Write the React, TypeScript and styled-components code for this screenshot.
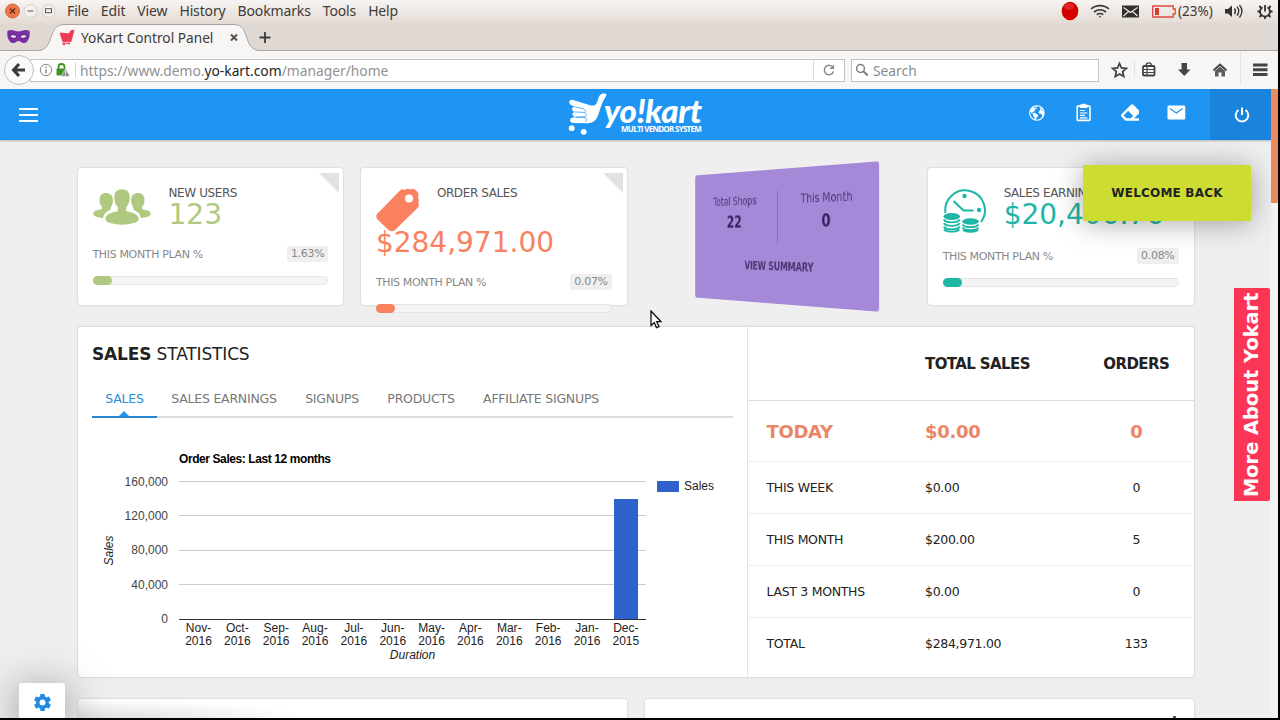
import React from "react";
import styled, { createGlobalStyle } from "styled-components";
import { FaEraser } from "react-icons/fa";
import { IoEarth, IoSettingsSharp } from "react-icons/io5";

const GlobalStyle = createGlobalStyle`
  * {
    box-sizing: border-box;
  }

  body {
    margin: 0;
    overflow: hidden;
    background: #000;
    font-family: "DejaVu Sans", sans-serif;
  }
`;

const menuItems = ["File", "Edit", "View", "History", "Bookmarks", "Tools", "Help"];

const tabs = [
  { label: "SALES", width: 65 },
  { label: "SALES EARNINGS", width: 134 },
  { label: "SIGNUPS", width: 82 },
  { label: "PRODUCTS", width: 96 },
  { label: "AFFILIATE SIGNUPS", width: 144 },
];

const totals = [
  { label: "THIS WEEK", sales: "$0.00", orders: "0" },
  { label: "THIS MONTH", sales: "$200.00", orders: "5" },
  { label: "LAST 3 MONTHS", sales: "$0.00", orders: "0" },
  { label: "TOTAL", sales: "$284,971.00", orders: "133" },
];

const months = ["Nov", "Oct", "Sep", "Aug", "Jul", "Jun", "May", "Apr", "Mar", "Feb", "Jan", "Dec"];

const MenuBar = () => (
  <MenuRow>
    <svg width="58" height="22" viewBox="0 0 58 22">
      <circle cx="12.5" cy="11" r="7" fill="#ee7748" stroke="#d9663c" />
      <path d="M10 8.5l5 5m0-5l-5 5" stroke="#5d2a17" strokeWidth="1.2" />
      <circle cx="30.5" cy="11" r="6.5" fill="#f4f0ed" stroke="#d8d0ca" />
      <path d="M27.5 11h6" stroke="#5b5450" />
      <circle cx="48.5" cy="11" r="6.5" fill="#f4f0ed" stroke="#d8d0ca" />
      <rect x="45.5" y="8.7" width="6" height="4" fill="none" stroke="#5b5450" />
    </svg>
    <MenuList>
      {menuItems.map((item) => (
        <span key={item}>{item}</span>
      ))}
    </MenuList>
    <Tray>
      <svg width="62" height="22" viewBox="0 0 62 22">
        <ellipse cx="10" cy="11" rx="8.3" ry="9.3" fill="#d40000" />
        <ellipse cx="9" cy="6.500" rx="5" ry="3.500" fill="#e33a3a" opacity="0.6" />
        <g transform="translate(30 0)" fill="none" stroke="#3c3a38" strokeWidth="1.6">
          <path d="M1 9C6 4.500 14 4.500 19 9M4 12c4-3 8-3 12 0M6.700 14.700c2.300-1.600 4.300-1.600 6.600 0" />
          <circle cx="10" cy="16.600" r="0.900" fill="#3c3a38" stroke="none" />
        </g>
      </svg>
      <svg width="58" height="22" viewBox="0 0 58 22">
        <rect x="0" y="5.500" width="17" height="12" fill="#33312f" />
        <path d="M1.500 7.500l7 5 7-5M1.500 16l5-4.500M15.500 16l-5-4.500" stroke="#f2eeea" strokeWidth="1.100" fill="none" />
        <path d="M30.700 6h20.500v3h2v5h-2v3H30.700z" fill="none" stroke="#df4a40" strokeWidth="1.300" />
        <rect x="33" y="8" width="4" height="7" fill="#df3a30" />
      </svg>
      <Battery>(23%)</Battery>
      <svg width="54" height="22" viewBox="0 0 54 22">
        <path d="M1 9h3l4-3.500v11.500L4 13.500H1z" fill="#33312f" />
        <path d="M10.500 8.500q2 2.700 0 5.500M13 6.700q3.500 4.500 0 9M15.500 5q5 6.200 0 12.500" fill="none" stroke="#33312f" strokeWidth="1.300" />
        <g transform="translate(41 11.500)" stroke="#33312f" fill="none">
          <path d="M-2.500 -4.300a5 5 0 1 0 5 0" strokeWidth="1.800" />
          <path d="M0-6.500v6.500" strokeWidth="1.800" />
          <path d="M-5 0h-2.500M5 0h2.500M0 5v2.500M-3.500 3.500l-2 2M3.500 3.500l2 2M-3.700-3.500l-2-2M3.700-3.500l2-2" strokeWidth="1.800" />
        </g>
      </svg>
    </Tray>
  </MenuRow>
);

const TabStrip = () => (
  <TabRow>
    <svg width="275" height="28" viewBox="0 23 275 28">
      <path d="M38 51C55 50 47 24 64 24H234C251 24 242 50 260 51z" fill="#f7f6f5" />
      <path d="M38 50.500C55 50 47 24.500 64 24.500H234C251 24.500 242 50 260 50.500" fill="none" stroke="#aaa5a2" />
      <path d="M7.500 31c4-2.500 8 .5 11 .5s7-3 11-.5c1 5-1 11-5 12-3 .5-4-2-6-2s-3 2.500-6 2c-4-1-6-7-5-12z" fill="#7b2fa5" />
      <path d="M10 36q4-3 7 1-4 3-7-1zM27 36q-4-3-7 1 4 3 7-1z" fill="#f4e5fa" stroke="#481463" strokeWidth="0.700" />
      <path d="M60 33l9 .8 1.800-3 3.200-.8-3 11.500-8 .5zM62 43.500h8" fill="#ef3950" stroke="#ef3950" strokeWidth="0.800" />
      <circle cx="64" cy="44.500" r="1" fill="#ef3950" />
      <circle cx="69" cy="43.500" r="1" fill="#ef3950" />
      <path d="M231 34.500l6 6m0-6l-6 6" stroke="#56524f" strokeWidth="2" />
      <path d="M259.500 37.500h11M265 32v11" stroke="#3d3a38" strokeWidth="1.800" />
    </svg>
    <TabTitle>YoKart Control Panel</TabTitle>
  </TabRow>
);

const NavBar = () => (
  <NavRow>
    <BackButton>
      <svg width="16" height="14" viewBox="0 0 16 14">
        <path d="M8 1L2.500 7 8 13M3 7h11" fill="none" stroke="#3c3a39" strokeWidth="3" />
      </svg>
    </BackButton>
    <UrlField>
      <svg width="41" height="20" viewBox="0 0 41 20">
        <circle cx="9" cy="10" r="5.700" fill="none" stroke="#888" />
        <path d="M9 9.200v4M9 6.500v1.500" stroke="#777" strokeWidth="1.300" />
        <path d="M21.500 9V7a3 3 0 0 1 6 0v2" fill="none" stroke="#3d9221" strokeWidth="1.800" />
        <rect x="19.500" y="8.500" width="9" height="7" rx="1" fill="#3d9221" />
        <path d="M28.500 8.500l4.500 8h-9z" fill="#8d8d8d" stroke="#fff" strokeWidth="0.600" />
        <path d="M28.500 11v2.500M28.500 14.500v1" stroke="#fff" />
        <path d="M38.500 2v15" stroke="#d5d5d5" />
      </svg>
      <Url>
        https://www.demo.<b>yo-kart.com</b>/manager/home
      </Url>
      <Reload>
        <svg width="14" height="14" viewBox="0 0 14 14">
          <path d="M11 4.500A4.700 4.700 0 1 0 11.500 8.500" fill="none" stroke="#888" strokeWidth="1.400" />
          <path d="M12 1.500V6H7.500z" fill="#888" />
        </svg>
      </Reload>
    </UrlField>
    <SearchField>
      <svg width="14" height="14" viewBox="0 0 14 14" fill="none" stroke="#7d7d7d">
        <circle cx="5.500" cy="5.500" r="3.900" strokeWidth="1.500" />
        <path d="M8.300 8.300l4.500 4.200" strokeWidth="2" />
      </svg>
      Search
    </SearchField>
    <svg width="170" height="38" viewBox="1108 51 170 38">
      <path d="M1119.500 63.500l2 4.500 4.800.5-3.600 3.200 1 4.800-4.200-2.500-4.200 2.500 1-4.800-3.600-3.200 4.800-.5z" fill="none" stroke="#464443" strokeWidth="1.800" />
      <path d="M1134.500 61v17M1240.500 51v34" stroke="#e4e2e0" />
      <g fill="none" stroke="#464443" strokeWidth="1.800">
        <rect x="1143" y="66" width="11.500" height="9.500" rx="1" />
        <path d="M1146 65.500c0-3.500 5.500-3.500 5.500 0M1143 69.500h11.500M1143 72.500h11.500M1147 67v8" strokeWidth="1.200" />
      </g>
      <path d="M1181.500 63h5.500v6.500h3.500l-6.200 6.500-6.300-6.500h3.500z" fill="#464443" />
      <path d="M1213.500 70.500l6.500-6 6.500 6" fill="none" stroke="#464443" strokeWidth="1.800" />
      <path d="M1215 71l5-4.500 5 4.500v5.500h-3.500v-4h-3v4H1215z" fill="#5d5b5a" />
      <path d="M1253 65h14.500M1253 69.700h14.500M1253 74.400h14.500" stroke="#464443" strokeWidth="3" />
    </svg>
  </NavRow>
);

const AppHeader = () => (
  <HeaderBar>
    <Burger>
      <i />
      <i />
      <i />
    </Burger>
    <Logo>
      <svg width="42" height="46" viewBox="566 90 42 46">
        <path
          d="M603 91.500C607 91 607 93 605.500 95C603.500 98 602 101 600.500 106L598 113.500C596.500 118 593 121 588 121.300L573 121C569 120.500 569 116 573 115.500L575.500 115C572 114.500 571 110.500 575 110C571 109 571 105 575 104.800L571 103C568 101.500 569 97 573 98L591 103.500C595 104 596 103 597.500 99C599 94 600 92 603 91.500z"
          fill="#fff"
        />
        <path
          d="M575 104.800l9 2.200q3 1.500 1 3.500l-10-.5M575.500 115l9.500-.2q2.500-2 .5-4M575.500 115.400l10 0q2.500 2.500 0 4.300"
          fill="none"
          stroke="#1f95f3"
          strokeWidth="0.700"
        />
        <circle cx="571.700" cy="126.200" r="2.900" fill="#fff" />
        <circle cx="583.700" cy="129.800" r="2.900" fill="#fff" />
      </svg>
      <LogoText>
        <strong>yo!kart</strong>
        <small>MULTI VENDOR SYSTEM</small>
      </LogoText>
    </Logo>
    <HeaderIcons>
      <IoEarth size={18} />
      <svg width="16" height="19" viewBox="0 0 16 19">
        <rect x="1.200" y="3" width="13" height="14.500" rx="0.800" fill="none" stroke="#fff" strokeWidth="1.600" />
        <path d="M4 1.500h2a2 2 0 0 1 3.500 0h2V5H4z" fill="#fff" />
        <path d="M4 7.500h5M4 10h7.500M4 12.500h5M4 15h7.500" stroke="#fff" strokeWidth="1.200" />
      </svg>
      <FaEraser size={19} />
      <svg width="19" height="15" viewBox="0 0 19 15">
        <rect x="0.500" y="0.500" width="18" height="14" rx="1.200" fill="#fff" />
        <path d="M3 3.500l6.500 4.500L16 3.500" fill="none" stroke="#1f95f3" strokeWidth="1.200" />
      </svg>
    </HeaderIcons>
    <PowerButton>
      <svg width="18" height="18" viewBox="0 0 18 18" fill="none" stroke="#fff" strokeWidth="2">
        <path d="M5.500 4a6.300 6.300 0 1 0 7 0M9 1.500v7.500" />
      </svg>
    </PowerButton>
  </HeaderBar>
);

const UsersIcon = () => (
  <svg width="58" height="38" viewBox="0 0 58 38" fill="#afc980">
    <path d="M13 5c4 0 7 2.500 7 7 0 4-1.500 6-2.500 8v2c-4 1.500-7 4-7.300 8C4 29.500 0 28 .3 25.500.5 22 5 22.500 9 21v-2c-2-2-2.500-4-2.500-7 0-4.500 2.500-7 6.500-7z" />
    <path d="M45 5c-4 0-7 2.500-7 7 0 4 1.500 6 2.500 8v2c4 1.500 7 4 7.300 8 6.200-.5 10.200-2 9.900-4.500C57.500 22 53 22.500 49 21v-2c2-2 2.500-4 2.500-7 0-4.500-2.500-7-6.500-7z" />
    <path
      d="M29 .5c5 0 8.500 3 8.500 9 0 4-1.500 7.500-3.500 10v3c5 1.500 12.500 2.500 12.500 8.500 0 4-9 6.500-17.500 6.500S11.500 35 11.500 31c0-6 7.500-7 12.500-8.500v-3c-2-2.500-3.500-6-3.500-10 0-6 3.500-9 8.500-9z"
      stroke="#fff"
      strokeWidth="1.500"
    />
  </svg>
);

const TagIcon = () => (
  <svg width="44" height="44" viewBox="0 0 44 44">
    <path
      d="M24 2.500c1.500-1.500 3-1.500 4.500-.5 2-1.500 4-1.500 6-.5 2-1 4.500-.5 6 1.500 2 1.500 2.500 4 1.500 6.500 1 2 1 3.500.3 5.500 1 1.500.7 3-.3 4.500L19 42c-2 1.700-4.500 1.700-6.500 0L1.500 31.500c-1.700-2-1.700-4 0-6z"
      fill="#fa815f"
    />
    <circle cx="33" cy="10.500" r="4" fill="#fff" />
  </svg>
);

const EarningsIcon = () => (
  <svg width="44" height="45" viewBox="0 0 44 45">
    <g fill="none" stroke="#1fb5a7" strokeWidth="2">
      <path d="M2.500 25A19.800 19.800 0 1 1 38 34" />
      <path d="M10.500 13l10 9.500h10" strokeWidth="2.200" />
    </g>
    <circle cx="21.500" cy="8" r="2.200" fill="#1fb5a7" />
    <circle cx="36" cy="22" r="2.200" fill="#1fb5a7" />
    <path d="M-1 25h20v8h17v12H-1z" fill="#fff" />
    <g fill="#1fb5a7">
      <ellipse cx="8.800" cy="28.500" rx="8.300" ry="3.500" />
      <ellipse cx="27.500" cy="33.500" rx="8.300" ry="3.200" />
    </g>
    <g fill="none" stroke="#1fb5a7" strokeWidth="1.800">
      <path d="M.8 31.500c2 3.800 14 3.800 16 0M.8 35c2 3.800 14 3.800 16 0M.8 38.500c2 3.800 14 3.800 16 0M1 41.500c3 2.800 12.500 2.800 15.500 0" />
      <path d="M19.500 36.500c2 3.500 14 3.500 16 0M19.500 39.500c2 3.500 14 3.500 16 0M20 42c3 2.300 12 2.300 15 0" />
    </g>
  </svg>
);

interface StatProps {
  icon: React.ReactNode;
  title: string;
  value: string;
  percent: string;
  color: string;
  headHeight: number;
  iconSpace: number;
  wrapped?: boolean;
}

const StatCard = (props: StatProps) => (
  <Card>
    <Corner />
    <StatHead $height={props.headHeight}>
      <StatIcon $width={props.iconSpace}>{props.icon}</StatIcon>
      <StatTitle>{props.title}</StatTitle>
      <StatValue $color={props.color} $wrapped={props.wrapped}>
        {props.value}
      </StatValue>
    </StatHead>
    <PlanRow>
      THIS MONTH PLAN %<Badge>{props.percent}</Badge>
    </PlanRow>
    <Track>
      <Fill $color={props.color} />
    </Track>
  </Card>
);

const SalesChart = () => {
  const left = 179;
  const step = 38.85;

  return (
    <ChartSvg width="640" height="240" viewBox="92 430 640 240">
      <text x="179" y="463" fontWeight="700" fill="#000" textLength="152">
        Order Sales: Last 12 months
      </text>
      {["160,000", "120,000", "80,000", "40,000", "0"].map((label, i) => (
        <g key={label}>
          <text x="168" y={485.5 + i * 34.4} textAnchor="end" fill="#444">
            {label}
          </text>
          <path
            d={`M${left} ${Math.round(481 + i * 34.4) + 0.5}H646`}
            stroke={i === 4 ? "#333" : "#ccc"}
          />
        </g>
      ))}
      <rect x="614" y="499" width="24" height="120" fill="#2f62cd" />
      {months.map((month, i) => (
        <text key={month} textAnchor="middle" fill="#222">
          <tspan x={left + 19.5 + i * step} y="632">
            {month}-
          </tspan>
          <tspan x={left + 19.5 + i * step} y="645">
            {month === "Dec" ? "2015" : "2016"}
          </tspan>
        </text>
      ))}
      <text x="412.500" y="659" textAnchor="middle" fontStyle="italic" fill="#222">
        Duration
      </text>
      <text transform="translate(113 550.500) rotate(-90)" textAnchor="middle" fontStyle="italic" fill="#222">
        Sales
      </text>
      <rect x="657" y="481" width="22" height="11" fill="#2f62cd" />
      <text x="684" y="490" fill="#222">
        Sales
      </text>
    </ChartSvg>
  );
};

const App = () => (
  <Screen>
    <GlobalStyle />
    <MenuBar />
    <TabStrip />
    <NavBar />
    <Viewport>
      <Page>
        <AppHeader />
        <Content>
          <StatGrid>
            <StatCard
              icon={<UsersIcon />}
              title="NEW USERS"
              value="123"
              percent="1.63%"
              color="#afc980"
              headHeight={62}
              iconSpace={76}
            />
            <StatCard
              icon={<TagIcon />}
              title="ORDER SALES"
              value="$284,971.00"
              percent="0.07%"
              color="#fa815f"
              headHeight={90}
              iconSpace={61}
              wrapped
            />
            <FlipCard>
              <FlipColumns>
                <div>
                  Total Shops<b>22</b>
                </div>
                <div>
                  This Month<b>0</b>
                </div>
              </FlipColumns>
              <Summary>VIEW SUMMARY</Summary>
            </FlipCard>
            <StatCard
              icon={<EarningsIcon />}
              title="SALES EARNINGS"
              value="$20,406.76"
              percent="0.08%"
              color="#1fb5a7"
              headHeight={64}
              iconSpace={61}
            />
          </StatGrid>
          <Panel>
            <Statistics>
              <Heading>
                <b>SALES</b> STATISTICS
              </Heading>
              <Tabs>
                {tabs.map((tab, i) => (
                  <Tab key={tab.label} $width={tab.width} $active={i === 0}>
                    {tab.label}
                  </Tab>
                ))}
              </Tabs>
              <SalesChart />
            </Statistics>
            <Totals>
              <TotalsRow $kind="head">
                <span />
                <span>TOTAL SALES</span>
                <span>ORDERS</span>
              </TotalsRow>
              <TotalsRow $kind="today">
                <span>TODAY</span>
                <span>$0.00</span>
                <span>0</span>
              </TotalsRow>
              {totals.map((row) => (
                <TotalsRow key={row.label}>
                  <span>{row.label}</span>
                  <span>{row.sales}</span>
                  <span>{row.orders}</span>
                </TotalsRow>
              ))}
            </Totals>
          </Panel>
          <BottomGrid>
            <BottomCard $shaded />
            <BottomCard>
              <i />
            </BottomCard>
          </BottomGrid>
        </Content>
        <GearButton>
          <IoSettingsSharp size={19} />
        </GearButton>
      </Page>
      <ScrollBar>
        <ScrollThumb />
      </ScrollBar>
    </Viewport>
    <Toast>WELCOME BACK</Toast>
    <MoreTab>More About Yokart</MoreTab>
    <Pointer width="12" height="19" viewBox="0 0 12 19">
      <path d="M1 1v14.500l3.300-3 2.200 5.200 2.500-1-2.300-5h4.300z" fill="#fff" stroke="#111" strokeWidth="1.300" />
    </Pointer>
  </Screen>
);

export default App;

const Screen = styled.div`
  position: relative;
  display: flex;
  flex-direction: column;
  width: 1280px;
  height: 720px;
  padding: 0 2px 2px 0;
  overflow: hidden;
  background: #000;
`;

const MenuRow = styled.div`
  display: flex;
  align-items: center;
  flex: 0 0 23px;
  min-height: 0;
  padding-bottom: 1px;
  background: linear-gradient(#f7f4f2, #e4dcd6);
  font-family: "Noto Sans", sans-serif;
  font-size: 14px;
  line-height: 20px;
  color: #3f3b38;
`;

const MenuList = styled.div`
  display: flex;
  gap: 12px;
  margin-left: 9px;
  letter-spacing: -0.14px;
`;

const Tray = styled.div`
  display: flex;
  align-items: center;
  margin-left: auto;
`;

const Battery = styled.span`
  width: 46px;
  margin-left: -2px;
  font-size: 13.5px;
`;

const TabRow = styled.div`
  display: flex;
  align-items: center;
  flex: 0 0 28px;
  background: linear-gradient(#e0d8d2 27px, #aaa5a2 27px);
`;

const TabTitle = styled.span`
  margin-left: -194px;
  font-family: "Noto Sans", sans-serif;
  font-size: 13.7px;
  color: #3f3b38;
`;

const NavRow = styled.div`
  display: flex;
  align-items: center;
  flex: 0 0 38px;
  padding-left: 4px;
  background: #f7f6f5;
  font-family: "Noto Sans", sans-serif;
  font-size: 13.8px;
`;

const BackButton = styled.div`
  display: flex;
  align-items: center;
  justify-content: center;
  flex: 0 0 30px;
  height: 30px;
  border: 1px solid #c2bfbd;
  border-radius: 50%;
  background: #fbfafa;
  z-index: 1;
`;

const UrlField = styled.div`
  display: flex;
  align-items: center;
  width: 815px;
  height: 23px;
  margin-left: -4px;
  padding-left: 6px;
  border: 1px solid #c4c1bf;
  background: #fff;
`;

const Url = styled.span`
  margin-left: 2px;
  color: #919191;

  b {
    font-weight: 400;
    color: #1e1e1e;
  }
`;

const Reload = styled.span`
  display: flex;
  align-items: center;
  justify-content: center;
  width: 31px;
  height: 21px;
  margin-left: auto;
  border-left: 1px solid #dcdad9;
`;

const SearchField = styled.div`
  display: flex;
  align-items: center;
  gap: 4px;
  width: 248px;
  height: 23px;
  margin: 0 9px 0 6px;
  padding-left: 3px;
  border: 1px solid #c4c1bf;
  background: #fff;
  color: #8b8b8b;
`;

const Viewport = styled.div`
  display: flex;
  flex: 1;
  min-height: 0;
`;

const Page = styled.div`
  position: relative;
  width: 1271px;
  overflow: hidden;
  background: #efefef;
`;

const ScrollBar = styled.div`
  width: 7px;
  background: #f4f4f4;
`;

const ScrollThumb = styled.div`
  height: 114px;
  background: #ec8b60;
`;

const HeaderBar = styled.header`
  display: flex;
  align-items: center;
  height: 51px;
  background: #1f95f3;
  box-shadow: 0 1px 2px rgba(0, 0, 0, 0.25);
  color: #fff;
`;

const Burger = styled.div`
  display: flex;
  flex-direction: column;
  gap: 4px;
  margin: 1px 519px 0 19px;

  i {
    width: 19px;
    height: 2px;
    background: #fff;
  }
`;

const Logo = styled.div`
  display: flex;
  margin-left: 9px;
`;

const LogoText = styled.div`
  display: flex;
  flex-direction: column;
  margin-left: -4px;
  font-family: "Open Sans", sans-serif;
  white-space: nowrap;

  strong {
    height: 31px;
    padding-top: 2px;
    font-family: Lato, sans-serif;
    font-size: 33px;
    font-weight: 900;
    font-style: italic;
    line-height: 33px;
    letter-spacing: -0.3px;
  }

  small {
    margin-left: 17px;
    font-size: 8px;
    font-weight: 700;
    line-height: 12px;
    letter-spacing: -0.72px;
  }
`;

const HeaderIcons = styled.div`
  display: flex;
  align-items: center;
  width: 158px;
  margin: -4px 24px 0 auto;

  svg:nth-child(2) {
    margin-left: 30px;
  }

  svg:nth-child(3) {
    margin-left: 29px;
  }

  svg:nth-child(4) {
    margin-left: 28px;
  }
`;

const PowerButton = styled.div`
  display: flex;
  align-items: center;
  justify-content: center;
  width: 61px;
  height: 51px;
  padding: 1px 0 0 2px;
  background: #1a84dc;
`;

const Content = styled.main`
  width: 1115.5px;
  margin: 28px 0 0 78px;
`;

const StatGrid = styled.div`
  display: grid;
  grid-template-columns: repeat(4, 1fr);
  gap: 18px;
`;

const Card = styled.section`
  position: relative;
  height: 137px;
  padding: 15px 15px 0 14.5px;
  border-radius: 3px;
  background: #fff;
  box-shadow: 0 0 2px rgba(0, 0, 0, 0.25);
`;

const Corner = styled.i`
  position: absolute;
  top: 5px;
  right: 4px;
  border-top: 20px solid #e2e2e2;
  border-left: 20px solid transparent;
`;

const StatHead = styled.div<{ $height: number }>`
  display: grid;
  grid-template-columns: auto 1fr;
  grid-template-rows: 20px 1fr;
  height: ${({ $height }) => $height}px;
`;

const StatIcon = styled.div<{ $width: number }>`
  grid-row: 1 / 3;
  width: ${({ $width }) => $width}px;
  height: 44px;
  padding-top: 5px;
`;

const StatTitle = styled.span`
  font-size: 12px;
  line-height: 20px;
  letter-spacing: -0.4px;
  color: #555;
`;

const StatValue = styled.span<{ $color: string; $wrapped?: boolean }>`
  margin: ${({ $wrapped }) => ($wrapped ? "26px 0 0 -61px" : "-2px 0 0")};
  font-size: 28px;
  line-height: 28px;
  color: ${({ $color }) => $color};
`;

const PlanRow = styled.div`
  display: flex;
  align-items: center;
  justify-content: space-between;
  height: 18px;
  font-size: 11px;
  letter-spacing: -0.35px;
  color: #888;
`;

const Badge = styled.span`
  padding: 0 4px;
  border-radius: 2px;
  background: #efefef;
  line-height: 16px;
  letter-spacing: -0.3px;
`;

const Track = styled.div`
  height: 9px;
  margin-top: 13px;
  border: 1px solid #e4e4e4;
  border-radius: 5px;
  background: #f4f4f4;
`;

const Fill = styled.div<{ $color: string }>`
  width: 19px;
  height: 9px;
  margin: -1px;
  border-radius: 5px;
  background: ${({ $color }) => $color};
`;

const FlipCard = styled.section`
  height: 137px;
  padding-top: 22px;
  border-radius: 3px;
  background: #a588d8;
  color: #4a3672;
  font-size: 12.3px;
  text-align: center;
  transform: perspective(893px) translateZ(-15px) rotateY(-45.7deg);
`;

const FlipColumns = styled.div`
  display: flex;

  div {
    flex: 1;
    height: 53px;
    padding-top: 2px;
  }

  div + div {
    border-left: 1px solid #8467b8;
  }

  b {
    display: block;
    margin-top: 5px;
    font-size: 17.5px;
    color: #38215f;
  }
`;

const Summary = styled.p`
  margin: 17px 0 0;
  font-size: 11.4px;
  font-weight: 700;
  letter-spacing: -0.2px;
`;

const Panel = styled.section`
  display: flex;
  height: 350px;
  margin-top: 22px;
  border-radius: 3px;
  background: #fff;
  box-shadow: 0 0 2px rgba(0, 0, 0, 0.3);
`;

const Statistics = styled.div`
  width: 669px;
  padding: 17px 14px 0;
`;

const Heading = styled.h2`
  margin: 0;
  font-size: 17px;
  font-weight: 400;
  line-height: 20px;
  letter-spacing: -0.15px;
  color: #222;
`;

const Tabs = styled.nav`
  display: flex;
  height: 38px;
  margin-top: 16px;
  border-bottom: 2px solid #dcdcdc;
`;

const Tab = styled.span<{ $width: number; $active?: boolean }>`
  position: relative;
  flex: 0 0 ${({ $width }) => $width}px;
  height: 38px;
  font-size: 12.5px;
  line-height: 38px;
  letter-spacing: -0.22px;
  text-align: center;
  white-space: nowrap;
  color: ${({ $active }) => ($active ? "#2a8fd8" : "#777")};
  border-bottom: ${({ $active }) => ($active ? "2px solid #2a86cf" : "none")};

  &::after {
    content: "";
    display: ${({ $active }) => ($active ? "block" : "none")};
    position: absolute;
    left: 27px;
    bottom: 0;
    border: 5.5px solid transparent;
    border-top: 0;
    border-bottom-color: #1f95f3;
  }
`;

const ChartSvg = styled.svg`
  display: block;
  margin-top: 12px;
  font-family: "Liberation Sans", sans-serif;
  font-size: 12px;
`;

const Totals = styled.div`
  flex: 1;
  border-left: 1px solid #e2e2e2;
`;

const TotalsRow = styled.div<{ $kind?: "head" | "today" }>`
  display: grid;
  grid-template-columns: 158.5px 1fr 114.5px;
  align-items: center;
  height: ${({ $kind }) => ($kind === "head" ? 74 : $kind === "today" ? 61 : 52)}px;
  padding: 0 0 ${({ $kind }) => ($kind ? 0 : 1)}px 18.5px;
  border-bottom: 1px solid ${({ $kind }) => ($kind === "head" ? "#dedede" : "#eee")};
  font-size: ${({ $kind }) => ($kind === "head" ? 15 : $kind === "today" ? 18 : 12.5)}px;
  font-weight: ${({ $kind }) => ($kind ? 700 : 400)};
  letter-spacing: ${({ $kind }) => ($kind === "head" ? -0.6 : -0.3)}px;
  color: ${({ $kind }) => ($kind === "today" ? "#ec8565" : "#222")};

  &:last-child {
    border-bottom: 0;
  }

  span:last-child {
    text-align: center;
  }
`;

const BottomGrid = styled.div`
  display: grid;
  grid-template-columns: 1fr 1fr;
  gap: 18px;
  margin-top: 22px;
`;

const BottomCard = styled.section<{ $shaded?: boolean }>`
  display: flex;
  justify-content: flex-end;
  height: 60px;
  padding: 17px 18px;
  border-radius: 3px;
  background: ${({ $shaded }) =>
    $shaded ? "radial-gradient(ellipse 240px 22px at 0 22px, #dadada, #fff) #fff" : "#fff"};
  box-shadow: 0 0 2px rgba(0, 0, 0, 0.25);

  i {
    width: 3px;
    height: 3px;
    background: #555;
  }
`;

const GearButton = styled.div`
  position: absolute;
  left: 19px;
  bottom: 0;
  display: flex;
  align-items: center;
  justify-content: center;
  width: 46px;
  height: 35px;
  padding-top: 3px;
  border-radius: 2px 2px 0 0;
  background: #fff;
  box-shadow: 0 8px 44px rgba(0, 0, 0, 0.5);
  color: #1f8be3;
`;

const Toast = styled.div`
  position: absolute;
  top: 165px;
  left: 1083px;
  width: 168px;
  height: 56px;
  background: #cddc31;
  box-shadow: 0 2px 28px rgba(0, 0, 0, 0.35);
  color: #222;
  font-size: 12px;
  font-weight: 700;
  line-height: 56px;
  letter-spacing: 0.2px;
  text-align: center;
`;

const MoreTab = styled.div`
  position: absolute;
  top: 288px;
  left: 1234px;
  width: 36px;
  height: 213px;
  border-radius: 2px 0 0 2px;
  background: #fa3556;
  color: #fff;
  font-size: 19.4px;
  font-weight: 700;
  line-height: 36px;
  text-align: center;
  white-space: nowrap;
  writing-mode: vertical-rl;
  transform: rotate(180deg);
`;

const Pointer = styled.svg`
  position: absolute;
  top: 310px;
  left: 650px;
`;
